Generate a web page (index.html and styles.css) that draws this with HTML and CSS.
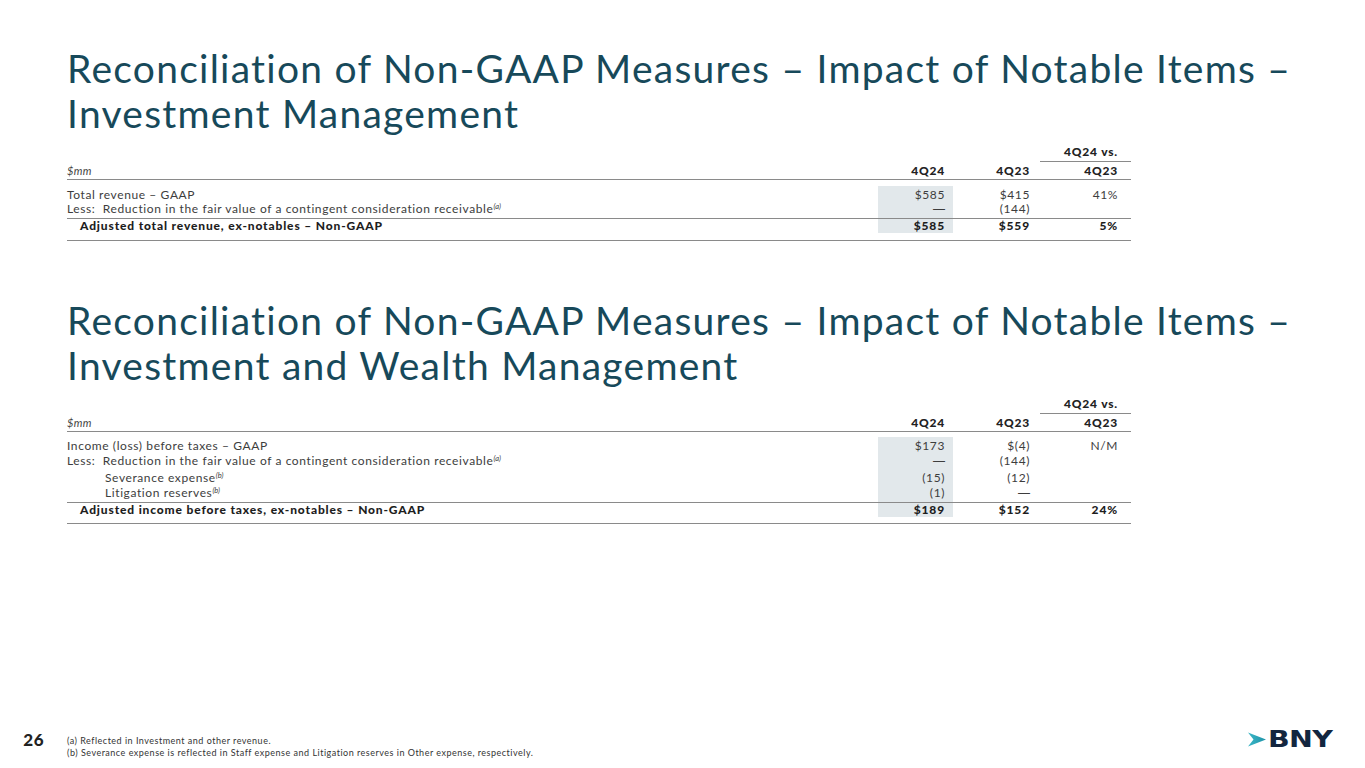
FILE: index.html
```html
<!DOCTYPE html>
<html>
<head>
<meta charset="utf-8">
<link rel="stylesheet" href="styles.css">
</head>
<body>
<div class="slide">
  <section class="block first">
    <h1 class="title">Reconciliation of Non-GAAP Measures – Impact of Notable Items –<br>Investment Management</h1>
    <div class="fin compact">
      <div class="row super"><span class="lbl"></span><span class="c1"></span><span class="c2"></span><span class="c3 vs">4Q24 vs.</span></div>
      <div class="row head"><span class="lbl unit">$mm</span><span class="c1">4Q24</span><span class="c2">4Q23</span><span class="c3">4Q23</span></div>
      <div class="body">
        <div class="row data first-row"><span class="lbl">Total revenue – GAAP</span><span class="c1 shade">$585</span><span class="c2">$415</span><span class="c3">41%</span></div>
        <div class="row data last-row"><span class="lbl">Less:&nbsp; Reduction in the fair value of a contingent consideration receivable<sup>(a)</sup></span><span class="c1 shade"><span class="dash">—</span></span><span class="c2">(144)</span><span class="c3"></span></div>
        <div class="row total"><span class="lbl">Adjusted total revenue, ex-notables – Non-GAAP</span><span class="c1 shade">$585</span><span class="c2">$559</span><span class="c3">5%</span></div>
      </div>
    </div>
  </section>

  <section class="block second">
    <h1 class="title">Reconciliation of Non-GAAP Measures – Impact of Notable Items –<br>Investment and Wealth Management</h1>
    <div class="fin roomy">
      <div class="row super"><span class="lbl"></span><span class="c1"></span><span class="c2"></span><span class="c3 vs">4Q24 vs.</span></div>
      <div class="row head"><span class="lbl unit">$mm</span><span class="c1">4Q24</span><span class="c2">4Q23</span><span class="c3">4Q23</span></div>
      <div class="body">
        <div class="row data first-row"><span class="lbl">Income (loss) before taxes – GAAP</span><span class="c1 shade">$173</span><span class="c2">$(4)</span><span class="c3">N/M</span></div>
        <div class="row data"><span class="lbl">Less:&nbsp; Reduction in the fair value of a contingent consideration receivable<sup>(a)</sup></span><span class="c1 shade"><span class="dash">—</span></span><span class="c2">(144)</span><span class="c3"></span></div>
        <div class="row data"><span class="lbl ind">Severance expense<sup>(b)</sup></span><span class="c1 shade">(15)</span><span class="c2">(12)</span><span class="c3"></span></div>
        <div class="row data last-row"><span class="lbl ind">Litigation reserves<sup>(b)</sup></span><span class="c1 shade">(1)</span><span class="c2"><span class="dash">—</span></span><span class="c3"></span></div>
        <div class="row total"><span class="lbl">Adjusted income before taxes, ex-notables – Non-GAAP</span><span class="c1 shade">$189</span><span class="c2">$152</span><span class="c3">24%</span></div>
      </div>
    </div>
  </section>

  <footer class="foot">
    <div class="pagenum">26</div>
    <div class="notes">
      <p>(a) Reflected in Investment and other revenue.</p>
      <p>(b) Severance expense is reflected in Staff expense and Litigation reserves in Other expense, respectively.</p>
    </div>
    <div class="logo">
      <svg class="chev" width="18" height="15" viewBox="0 0 18 15">
        <defs>
          <linearGradient id="cg" x1="0" y1="0" x2="1" y2="0">
            <stop offset="0" stop-color="#3bb6c6"/>
            <stop offset="1" stop-color="#1f93a8"/>
          </linearGradient>
        </defs>
        <polygon points="0,0.5 18,7.5 0,14.5 5.5,7.5" fill="url(#cg)"/>
      </svg>
      <span class="bny">BNY</span>
    </div>
  </footer>
</div>
</body>
</html>
```

FILE: styles.css
```css
html, body {
  margin: 0;
  padding: 0;
  background: #ffffff;
}
body {
  font-family: Lato, "Open Sans", "Liberation Sans", sans-serif;
  color: #222;
}
.slide {
  width: 1365px;
  height: 768px;
  display: flex;
  flex-direction: column;
  overflow: hidden;
}
.block {
  padding-left: 67px;
  width: 1064px;
}
.block.first {
  padding-top: 46px;
}
.block.second {
  padding-top: 57px;
}
.title {
  margin: 0;
  font-weight: 400;
  font-size: 39px;
  line-height: 45px;
  color: #17495a;
  white-space: nowrap;
  letter-spacing: 1.25px;
}

/* financial table */
.fin {
  width: 1064px;
  font-size: 12px;
  letter-spacing: 0.6px;
  color: #3d3d3d;
  border-bottom: 1px solid #8a8a8a;
}
.row {
  display: grid;
  grid-template-columns: 1fr 75px 87px 91px;
}
.row > span {
  white-space: nowrap;
}
.row .c1 { text-align: right; padding-right: 8px; }
.row .c2 { text-align: right; padding-right: 10px; }
.row .c3 { text-align: right; padding-right: 13px; }

.super {
  height: 26px;
  align-items: end;
}
.super span {
  font-weight: 900;
  line-height: 14px;
  letter-spacing: 0.8px;
  color: #222;
}
.super .vs {
  padding-bottom: 2px;
  border-bottom: 1px solid #8a8a8a;
}
.head {
  height: 17px;
  line-height: 17px;
  border-bottom: 1px solid #8a8a8a;
}
.head span {
  font-weight: 900;
  letter-spacing: 0.8px;
  color: #222;
}
.head .unit {
  font-weight: 400;
  font-style: italic;
  font-size: 11px;
  letter-spacing: 0.3px;
  color: #444;
}
.compact .body {
  margin-top: 6px;
  padding-bottom: 7px;
}
.roomy .body {
  margin-top: 5px;
  padding-bottom: 6px;
}
.compact .data {
  line-height: 14px;
}
.roomy .data {
  line-height: 15.3px;
}
.compact .first-row > span { padding-top: 2px; }
.roomy .first-row > span { padding-top: 1px; }
.compact .last-row > span { padding-bottom: 2px; }
.roomy .last-row > span { padding-bottom: 1px; }

.shade {
  background: #e2e8eb;
}
.dash {
  font-family: "Liberation Sans", Arial, sans-serif;
  letter-spacing: 0;
}
.fin sup {
  font-size: 7.5px;
  font-style: italic;
  letter-spacing: 0;
  line-height: 0;
  vertical-align: 4px;
}
.data .ind {
  padding-left: 38px;
}
.total {
  border-top: 1px solid #8a8a8a;
  line-height: 14px;
}
.total span {
  font-weight: 900;
  color: #1e1e1e;
  letter-spacing: 0.85px;
}
.total .lbl {
  padding-left: 13px;
}

/* footer */
.foot {
  margin-top: auto;
  padding-bottom: 9px;
  display: flex;
  align-items: flex-start;
}
.pagenum {
  width: 44px;
  text-align: right;
  font-weight: 900;
  font-size: 17px;
  line-height: 20px;
  letter-spacing: 0.5px;
  color: #222;
}
.notes {
  margin-left: 23px;
  padding-top: 5px;
  font-size: 9px;
  line-height: 12px;
  letter-spacing: 0.5px;
  color: #333;
}
.notes p {
  margin: 0;
}
.logo {
  margin-left: auto;
  margin-right: 33px;
  margin-top: -1px;
  display: flex;
  align-items: center;
  gap: 2px;
}
.chev {
  display: block;
}
.bny {
  font-family: "DejaVu Sans", "Liberation Sans", sans-serif;
  font-weight: 700;
  font-size: 23px;
  line-height: 20px;
  color: #13263f;
  letter-spacing: -0.5px;
  transform: scaleX(1.24);
  transform-origin: left center;
  margin-right: 12px;
}
```
